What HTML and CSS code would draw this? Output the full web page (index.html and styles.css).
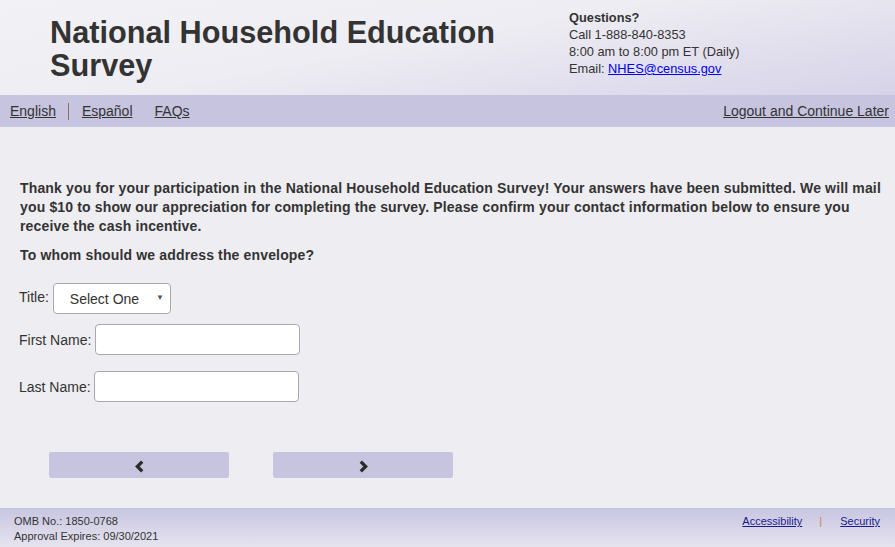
FILE: index.html
```html
<!DOCTYPE html>
<html lang="en">
  <head>
    <meta charset="UTF-8" />
    <title>National Household Education Survey</title>
    <link rel="stylesheet" href="styles.css">
  </head>
  <body>
    <header class="site-header">
      <h1 class="site-title">National Household Education Survey</h1>
      <div class="contact">
        <strong>Questions?</strong>
        <p>Call 1-888-840-8353</p>
        <p>8:00 am to 8:00 pm ET (Daily)</p>
        <p>Email: <a href="#">NHES@census.gov</a></p>
      </div>
    </header>
    <nav class="nav-bar">
      <div class="nav-left">
        <a href="#">English</a>
        <span class="nav-sep"></span>
        <a href="#">Español</a>
        <a href="#" class="faq">FAQs</a>
      </div>
      <a href="#">Logout and Continue Later</a>
    </nav>
    <main class="content">
      <p class="intro">
        Thank you for your participation in the National Household Education Survey! Your answers have been submitted. We will mail you $10 to show our appreciation for completing the survey. Please confirm your contact information below to ensure you receive the cash incentive.
      </p>
      <p class="question">To whom should we address the envelope?</p>
      <form class="contact-form">
        <div class="row row-title">
          <label for="title">Title:</label>
          <div class="select-wrap">
            <select id="title">
              <option>Select One</option>
              <option>Mr.</option>
              <option>Mrs.</option>
              <option>Ms.</option>
            </select>
            <span class="caret">&#9660;</span>
          </div>
        </div>
        <div class="row row-first">
          <label for="first">First Name:</label>
          <input id="first" type="text" />
        </div>
        <div class="row row-last">
          <label for="last">Last Name:</label>
          <input id="last" type="text" />
        </div>
      </form>
      <div class="nav-buttons">
        <button aria-label="previous">
          <svg viewBox="0 0 10 12"><path d="M7.5 1.5 3 6l4.5 4.5" /></svg>
        </button>
        <button aria-label="next">
          <svg viewBox="0 0 10 12"><path d="M2.5 1.5 7 6l-4.5 4.5" /></svg>
        </button>
      </div>
    </main>
    <footer class="site-footer">
      <div class="omb">
        <p>OMB No.: 1850-0768</p>
        <p>Approval Expires: 09/30/2021</p>
      </div>
      <div class="footer-links">
        <a href="#">Accessibility</a>
        <span class="bar">|</span>
        <a href="#">Security</a>
      </div>
    </footer>
  </body>
</html>
```

FILE: styles.css
```css
body {
  margin: 0;
  font-family: "Liberation Sans", Arial, sans-serif;
  color: #333;
  background-color: #eeedf2;
}
p {
  margin: 0;
}
.site-header {
  height: 95px;
  box-sizing: border-box;
  display: flex;
  background: linear-gradient(170deg, #f2f1f5 0%, #eeedf3 45%, #d6d3e8 100%);
}
.site-title {
  width: 519px;
  margin: 0;
  padding: 16px 0 0 50px;
  font-size: 30.7px;
  line-height: 33px;
  font-weight: bold;
  color: #333;
}
.contact {
  padding-top: 9px;
  font-size: 12.8px;
  line-height: 17px;
}
.contact strong {
  display: block;
}
.contact a {
  color: #0000ee;
}
.nav-bar {
  height: 32px;
  display: flex;
  align-items: center;
  justify-content: space-between;
  padding: 0 6px 0 10px;
  background-color: #c7c4e0;
  font-size: 14px;
}
.nav-bar a {
  color: #333;
}
.nav-left {
  display: flex;
  align-items: center;
}
.nav-sep {
  width: 1px;
  height: 17px;
  margin: 0 13px 0 12px;
  background-color: #8a7468;
}
.faq {
  margin-left: 22px;
}
.content {
  padding: 52px 10px 0 20px;
  height: 381px;
  box-sizing: border-box;
}
.intro,
.question {
  font-size: 14px;
  line-height: 19px;
  font-weight: bold;
  letter-spacing: 0.15px;
}
.question {
  margin-top: 10px;
}
.contact-form {
  margin: 18px 0 0 -1px;
  font-size: 14px;
}
.row {
  display: flex;
  align-items: center;
}
.row label {
  margin-right: 4px;
}
.row-title label {
  margin-right: 4px;
  align-self: flex-start;
  padding-top: 6px;
}
.row-first {
  margin-top: 10px;
}
.row-last {
  margin-top: 16px;
}
.row-last label {
  margin-right: 3px;
}
.select-wrap {
  position: relative;
}
select {
  appearance: none;
  width: 118px;
  height: 31px;
  padding: 0 0 0 16px;
  border: 1px solid #aaa;
  border-radius: 4px;
  background-color: white;
  font-family: inherit;
  font-size: 14px;
  color: #333;
}
.caret {
  position: absolute;
  right: 7px;
  top: 10px;
  font-size: 8px;
  color: #555;
  pointer-events: none;
}
input {
  width: 205px;
  height: 31px;
  box-sizing: border-box;
  border: 1px solid #aaa;
  border-radius: 4px;
  background-color: white;
}
.nav-buttons {
  display: flex;
  gap: 44px;
  margin: 50px 0 0 29px;
}
.nav-buttons button {
  width: 180px;
  height: 26px;
  border: none;
  border-radius: 2px;
  background-color: #c7c4e0;
  display: flex;
  align-items: center;
  justify-content: center;
  cursor: pointer;
}
.nav-buttons svg {
  width: 11px;
  height: 13px;
  fill: none;
  stroke: #2b2b2b;
  stroke-width: 3;
  margin-top: 2px;
}
.site-footer {
  height: 39px;
  display: flex;
  justify-content: space-between;
  padding: 0 15px 0 14px;
  background: linear-gradient(to bottom, #c8c5e1, #e6e4ef);
  font-size: 11px;
}
.omb {
  padding-top: 6px;
  line-height: 15px;
}
.footer-links {
  padding-top: 6px;
  line-height: 15px;
}
.footer-links a {
  color: #1a1a8c;
}
.bar {
  margin: 0 15px 0 14px;
  color: #c08a3e;
}
```
